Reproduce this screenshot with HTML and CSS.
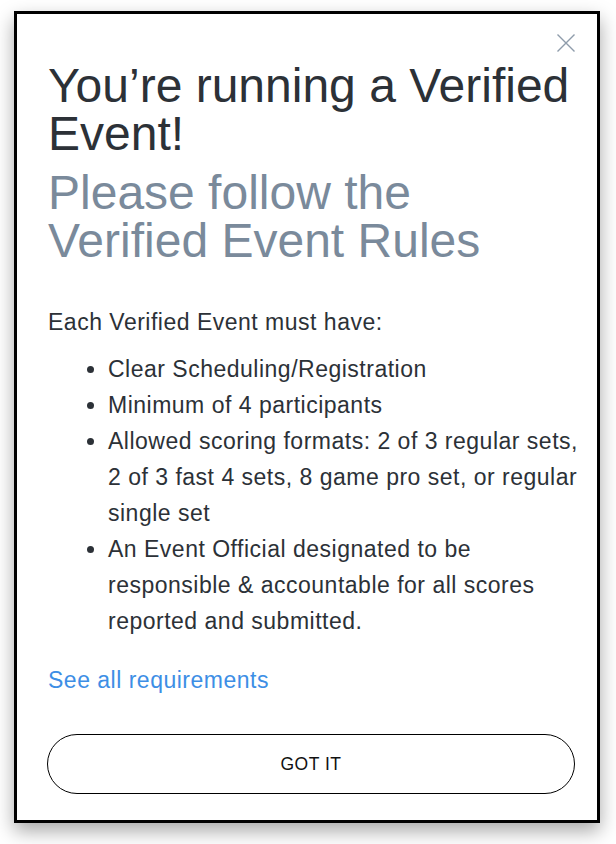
FILE: index.html
```html
<!DOCTYPE html>
<html>
<head>
<meta charset="utf-8">
<link rel="stylesheet" href="styles.css">
</head>
<body>
<div class="modal">
  <button class="close" aria-label="Close">
    <svg width="18" height="18" viewBox="0 0 18 18"><path d="M0.5 0.5 L17.5 17.5 M17.5 0.5 L0.5 17.5" stroke="#8e9cab" stroke-width="1.4" fill="none"/></svg>
  </button>
  <h1 class="title">You’re running a Verified Event!</h1>
  <h2 class="subtitle">Please follow the Verified Event Rules</h2>
  <p class="lead">Each Verified Event must have:</p>
  <ul class="rules">
    <li>Clear Scheduling/Registration</li>
    <li>Minimum of 4 participants</li>
    <li>Allowed scoring formats: 2 of 3 regular sets, 2 of 3 fast 4 sets, 8 game pro set, or regular single set</li>
    <li>An Event Official designated to be responsible &amp; accountable for all scores reported and submitted.</li>
  </ul>
  <a class="link" href="#">See all requirements</a>
  <button class="got">GOT IT</button>
</div>
</body>
</html>
```
FILE: styles.css
```css
html, body {
  margin: 0;
  padding: 0;
  background: #ffffff;
}
body {
  width: 616px;
  height: 844px;
  font-family: "Liberation Sans", Arial, sans-serif;
  color: #2c3137;
}
.modal {
  position: relative;
  box-sizing: border-box;
  margin: 11px 0 0 14px;
  width: 586px;
  height: 812px;
  border: 3px solid #000;
  background: #fff;
  box-shadow: 0 8px 18px rgba(0,0,0,0.35);
  padding: 48px 22px 0 30px;
  display: flex;
  flex-direction: column;
}
.close {
  position: absolute;
  top: 20px;
  right: 22px;
  border: 0;
  background: none;
  padding: 0;
  width: 18px;
  height: 18px;
  line-height: 0;
}
.title, .subtitle {
  margin: 0 0 0 1px;
  font-size: 48px;
  line-height: 48px;
  font-weight: 400;
}
.title { color: #2c3137; }
.subtitle { color: #7a8a9b; margin-top: 11px; padding-right: 60px; }
.lead, .rules, .link {
  font-size: 23px;
  line-height: 36px;
  letter-spacing: 0.5px;
}
.lead {
  margin: 39px 0 0 1px;
}
.rules {
  margin: 11px -14px 0 0;
  padding-left: 61px;
}
.link {
  margin-top: 23px;
  margin-left: 1px;
  color: #3d8ee5;
  text-decoration: none;
  align-self: flex-start;
}
.got {
  margin-top: 36px;
  height: 60px;
  border: 1px solid #000;
  border-radius: 30px;
  background: #fff;
  font-family: "Liberation Sans", Arial, sans-serif;
  font-size: 17.5px;
  color: #111;
  letter-spacing: 0.5px;
}
```
